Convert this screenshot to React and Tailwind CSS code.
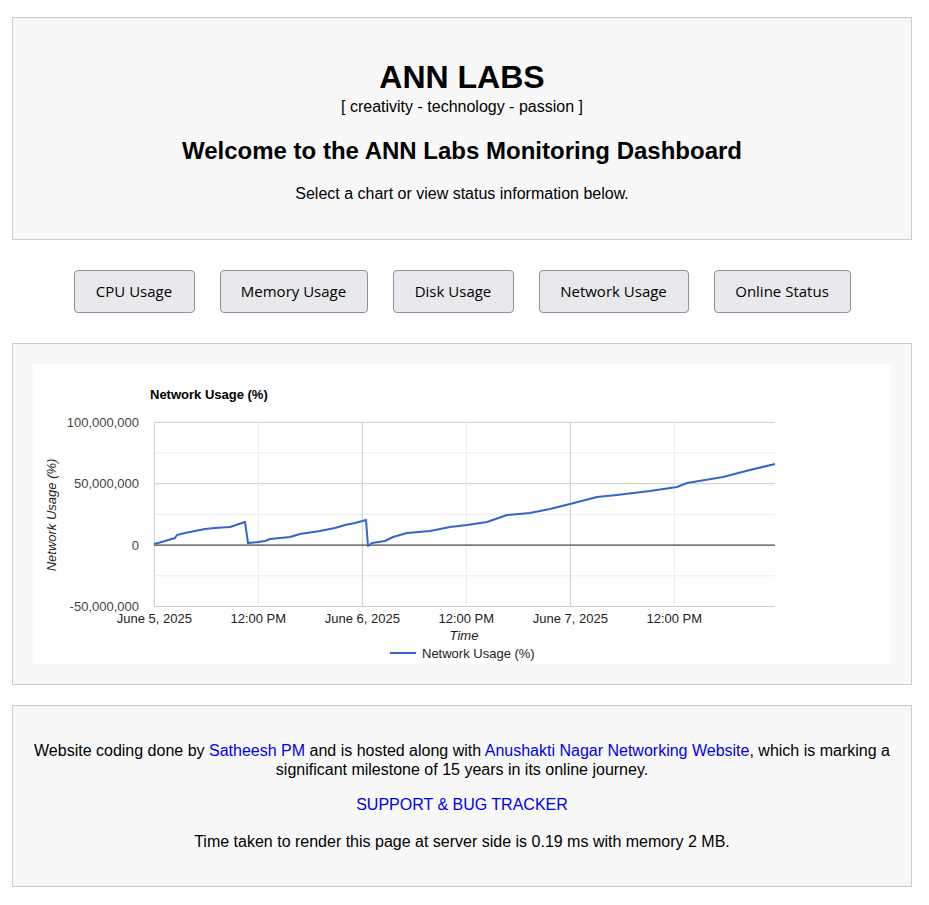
import React from "react";

const buttons = [
    {label: "CPU Usage", w: "w-[121px]"},
    {label: "Memory Usage", w: "w-[148px]"},
    {label: "Disk Usage", w: "w-[121px]"},
    {label: "Network Usage", w: "w-[150px]"},
    {label: "Online Status", w: "w-[137px]"},
];

// plot area inside the white chart box
const PL = 121;
const PR = 742;
const PT = 58.3;
const STEP = 30.7;

const yTicks = [
    {y: PT, label: "100,000,000", major: true},
    {y: PT + STEP, minor: true},
    {y: PT + STEP * 2, label: "50,000,000", major: true},
    {y: PT + STEP * 3, minor: true},
    {y: PT + STEP * 4, label: "0", zero: true},
    {y: PT + STEP * 5, minor: true},
    {y: PT + STEP * 6, label: "-50,000,000", major: true},
];

const xTicks = [
    {x: 121.3, label: "June 5, 2025", major: true},
    {x: 225.3, label: "12:00 PM"},
    {x: 329.3, label: "June 6, 2025", major: true},
    {x: 433.3, label: "12:00 PM"},
    {x: 537.3, label: "June 7, 2025", major: true},
    {x: 641.3, label: "12:00 PM"},
];

// sampled from the picture, page coords
const raw = [
    [154, 544], [158, 543], [165, 541], [175, 538], [177, 535], [185, 533], [195, 531],
    [205, 529], [215, 528], [230, 527], [236, 525], [245, 522], [248, 543], [258, 542],
    [265, 541], [270, 539], [290, 537], [300, 534], [320, 531], [335, 528], [345, 525],
    [355, 523], [366, 520], [368, 546], [372, 543], [385, 541], [393, 537], [407, 533],
    [430, 531], [450, 527], [467, 525], [487, 522], [507, 515], [530, 513], [550, 509],
    [570, 504], [597, 497], [617, 495], [650, 491], [677, 487], [687, 483], [723, 477],
    [750, 470], [775, 464],
];
const points = raw.map(([x, y]) => `${x - 33},${y - 364}`).join(" ");

const Chart = () => (
    <svg width="858" height="300" className="block" style={{fontFamily: "'Liberation Sans', Arial, sans-serif"}}>
        <rect width="858" height="300" fill="#fff" />
        <text x="117" y="35" fontSize="13" fontWeight="bold" fill="#000">Network Usage (%)</text>

        {yTicks.map((t, i) => (
            <line key={"h" + i} x1={PL} x2={PR} y1={t.y} y2={t.y}
                  stroke={t.minor ? "#ebebeb" : "#cccccc"} strokeWidth="1" />
        ))}
        {xTicks.map((t, i) => (
            <line key={"v" + i} x1={t.x} x2={t.x} y1={PT} y2={PT + STEP * 6}
                  stroke={t.major ? "#cccccc" : "#ebebeb"} strokeWidth="1" />
        ))}
        <line x1={PL} x2={PR} y1={PT + STEP * 4} y2={PT + STEP * 4} stroke="#333" strokeWidth="1" />

        {yTicks.filter(t => t.label).map((t, i) => (
            <text key={"yl" + i} x="106" y={t.y + 4.6} fontSize="13" textAnchor="end" fill="#444">{t.label}</text>
        ))}
        {xTicks.map((t, i) => (
            <text key={"xl" + i} x={t.x} y="259" fontSize="13" textAnchor="middle" fill="#222">{t.label}</text>
        ))}

        <text x="431" y="276" fontSize="13" fontStyle="italic" textAnchor="middle" fill="#222">Time</text>
        <text x="0" y="0" fontSize="13" fontStyle="italic" textAnchor="middle" fill="#222"
              transform="translate(22.5 151) rotate(-90)">Network Usage (%)</text>

        <polyline points={points} fill="none" stroke="#3366cc" strokeWidth="2" strokeLinejoin="round" />

        <line x1="357" x2="383" y1="289" y2="289" stroke="#3366cc" strokeWidth="2" />
        <text x="389" y="293.5" fontSize="13" fill="#222">Network Usage (%)</text>
    </svg>
);

const App = () => {
    return (
        <div className="min-h-screen bg-white text-black pt-[17px] pb-[18px] font-['Liberation_Sans',Arial,sans-serif]">
            <div className="ml-[12px] w-[900px]">

                {/* Header */}
                <div className="border border-[#cccccc] bg-[#f8f8f8] text-center pt-[41px] pb-[36px]">
                    <h1 className="text-[32px] leading-[36px] font-bold">ANN LABS</h1>
                    <p className="mt-[3px] text-[16px] leading-[18px]">[ creativity - technology - passion ]</p>
                    <h2 className="mt-[21px] text-[24px] leading-[28px] font-bold">Welcome to the ANN Labs Monitoring Dashboard</h2>
                    <p className="mt-[20px] text-[16px] leading-[18px]">Select a chart or view status information below.</p>
                </div>

                {/* Chart buttons */}
                <div className="mt-[30px] flex justify-center gap-[25px]">
                    {buttons.map(b => (
                        <button
                            key={b.label}
                            className={`${b.w} h-[43px] flex items-center justify-center rounded-[4px] border border-[#8f8f9d] bg-[#e9e9ed] text-[15px] text-black font-['Open_Sans',sans-serif]`}
                        >
                            {b.label}
                        </button>
                    ))}
                </div>

                {/* Chart */}
                <div className="mt-[30px] border border-[#cccccc] bg-[#f8f8f8] p-[20px]">
                    <Chart />
                </div>

                {/* Footer */}
                <div className="mt-[20px] border border-[#cccccc] bg-[#f8f8f8] text-center px-[20px] pt-[35px] pb-[35px] text-[16px] leading-[19px]">
                    <p>
                        Website coding done by <a href="#" className="text-[#0000ee]">Satheesh PM</a> and is hosted along with{" "}
                        <a href="#" className="text-[#0000ee]">Anushakti Nagar Networking Website</a>, which is marking a significant milestone of 15 years in its online journey.
                    </p>
                    <p className="mt-[16px]">
                        <a href="#" className="text-[#0000ee]">SUPPORT &amp; BUG TRACKER</a>
                    </p>
                    <p className="mt-[18px]">Time taken to render this page at server side is 0.19 ms with memory 2 MB.</p>
                </div>
            </div>
        </div>
    );
};

export default App;
